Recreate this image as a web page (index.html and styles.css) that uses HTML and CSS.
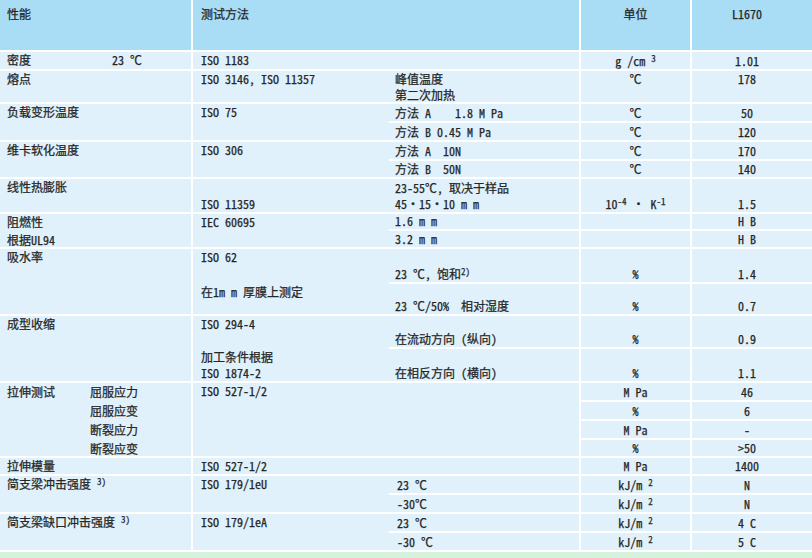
FILE: index.html
```html
<!DOCTYPE html>
<html lang="zh-CN">
<head>
<meta charset="utf-8">
<title>L1670 性能表</title>
<link rel="stylesheet" href="styles.css">
</head>
<body>
<div class="sheet">
<div class="c h k">性能</div>
<div class="c h m w2">测试方法</div>
<div class="c h u">单位</div>
<div class="c h v">L1670</div>

<div class="c k"><p><span class="lab">密度</span>23 ℃</p></div>
<div class="c m">ISO 1183</div>
<div class="c d"></div>
<div class="c u"><p>g /cm <sup>3</sup></p></div>
<div class="c v">1.01</div>

<div class="c k">熔点</div>
<div class="c m">ISO 3146, ISO 11357</div>
<div class="c d top"><p>峰值温度<br>第二次加热</p></div>
<div class="c u top">℃</div>
<div class="c v top">178</div>

<div class="c k r2">负载变形温度</div>
<div class="c m r2">ISO 75</div>
<div class="c d">方法 A    1.8 M Pa</div>
<div class="c u">℃</div>
<div class="c v">50</div>
<div class="c d">方法 B 0.45 M Pa</div>
<div class="c u">℃</div>
<div class="c v">120</div>

<div class="c k r2">维卡软化温度</div>
<div class="c m r2">ISO 306</div>
<div class="c d">方法 A  10N</div>
<div class="c u">℃</div>
<div class="c v">170</div>
<div class="c d">方法 B  50N</div>
<div class="c u">℃</div>
<div class="c v">140</div>

<div class="c k">线性热膨胀</div>
<div class="c m bot">ISO 11359</div>
<div class="c d"><p>23-55℃, 取决于样品<br>45•15•10 m m</p></div>
<div class="c u"><p>10<sup>-4</sup> • K<sup>-1</sup></p></div>
<div class="c v">1.5</div>

<div class="c k r2"><p class="ln">阻燃性</p><p class="ln">根据UL94</p></div>
<div class="c m r2">IEC 60695</div>
<div class="c d">1.6 m m</div>
<div class="c u"></div>
<div class="c v">H B</div>
<div class="c d">3.2 m m</div>
<div class="c u"></div>
<div class="c v">H B</div>

<div class="c k r2">吸水率</div>
<div class="c m r2"><p class="blk35">ISO 62</p><p>在1m m 厚膜上测定</p></div>
<div class="c d"><p>23 ℃, 饱和<sup>2)</sup></p></div>
<div class="c u">%</div>
<div class="c v">1.4</div>
<div class="c d">23 ℃/50%  相对湿度</div>
<div class="c u">%</div>
<div class="c v">0.7</div>

<div class="c k r2">成型收缩</div>
<div class="c m r2"><p class="blk33">ISO 294-4</p><p>加工条件根据<br>ISO 1874-2</p></div>
<div class="c d">在流动方向 (纵向)</div>
<div class="c u">%</div>
<div class="c v">0.9</div>
<div class="c d">在相反方向 (横向)</div>
<div class="c u">%</div>
<div class="c v">1.1</div>

<div class="c k r4 tens"><p class="tl">拉伸测试</p><div class="subs"><p>屈服应力</p><p>屈服应变</p><p>断裂应力</p><p>断裂应变</p></div></div>
<div class="c m r4">ISO 527-1/2</div>
<div class="c d r4"></div>
<div class="c u">M Pa</div>
<div class="c v">46</div>
<div class="c u">%</div>
<div class="c v">6</div>
<div class="c u">M Pa</div>
<div class="c v">-</div>
<div class="c u">%</div>
<div class="c v">&gt;50</div>

<div class="c k">拉伸模量</div>
<div class="c m">ISO 527-1/2</div>
<div class="c d"></div>
<div class="c u">M Pa</div>
<div class="c v">1400</div>

<div class="c k r2"><p>简支梁冲击强度 <sup>3)</sup></p></div>
<div class="c m r2">ISO 179/1eU</div>
<div class="c d d2">23 ℃</div>
<div class="c u"><p>kJ/m <sup>2</sup></p></div>
<div class="c v">N</div>
<div class="c d d2">-30℃</div>
<div class="c u"><p>kJ/m <sup>2</sup></p></div>
<div class="c v">N</div>

<div class="c k r2"><p>简支梁缺口冲击强度 <sup>3)</sup></p></div>
<div class="c m r2">ISO 179/1eA</div>
<div class="c d d2">23 ℃</div>
<div class="c u"><p>kJ/m <sup>2</sup></p></div>
<div class="c v">4 C</div>
<div class="c d d2">-30 ℃</div>
<div class="c u"><p>kJ/m <sup>2</sup></p></div>
<div class="c v">5 C</div>

<div class="foot"></div>
</div>
</body>
</html>
```
FILE: styles.css
```css
html, body {
  margin: 0;
  padding: 0;
  background: #ffffff;
}

body {
  font-family: "Noto Sans Mono CJK SC", "Noto Sans CJK SC", sans-serif;
  font-size: 12px;
  color: #262626;
  -webkit-text-stroke: 0.25px #262626;
}

p {
  margin: 0;
}

sup {
  font-size: 9px;
  line-height: 0;
  vertical-align: 4px;
}

.sheet {
  display: grid;
  width: 812px;
  grid-template-columns: 193px 196px 190px 111px 122px;
  grid-template-rows: 50px 17px 31px 17px 17px 17px 16px 33px 15px 16px 33px 30px 31px 32px 17px 17px 17px 16px 16px 17px 17px 17px 17px 6px;
  row-gap: 2px;
}

.c {
  background: #e0f1fb;
  line-height: 16px;
  white-space: pre;
  display: flex;
  flex-direction: column;
  justify-content: flex-start;
  min-width: 0;
}

.h {
  background: #a9dcf5;
  padding-top: 6px;
}

.k {
  border-right: 2px solid #ffffff;
  padding-left: 7px;
}

.m {
  padding-left: 8px;
}

.d {
  padding-left: 6px;
  justify-content: flex-end;
}

.d2 {
  padding-left: 8px;
}

.u {
  border-left: 2px solid #ffffff;
  align-items: center;
  justify-content: flex-end;
}

.v {
  border-left: 2px solid #ffffff;
  align-items: center;
  justify-content: flex-end;
  padding-right: 10px;
}

.h.u,
.h.v,
.top {
  justify-content: flex-start;
}

.bot {
  justify-content: flex-end;
}

.w2 {
  grid-column: span 2;
}

.r2 {
  grid-row: span 2;
}

.r4 {
  grid-row: span 4;
}

.lab {
  display: inline-block;
  width: 105px;
}

.ln {
  line-height: 16px;
  margin-bottom: 2px;
}

.ln:last-child {
  margin-bottom: 0;
}

.blk35 {
  height: 35px;
}

.blk33 {
  height: 33px;
}

.tens {
  flex-direction: row;
}

.tl {
  width: 83px;
  line-height: 17px;
}

.subs p {
  height: 19px;
  line-height: 17px;
}

.foot {
  grid-column: 1 / -1;
  background: #d5f2dd;
}
```
